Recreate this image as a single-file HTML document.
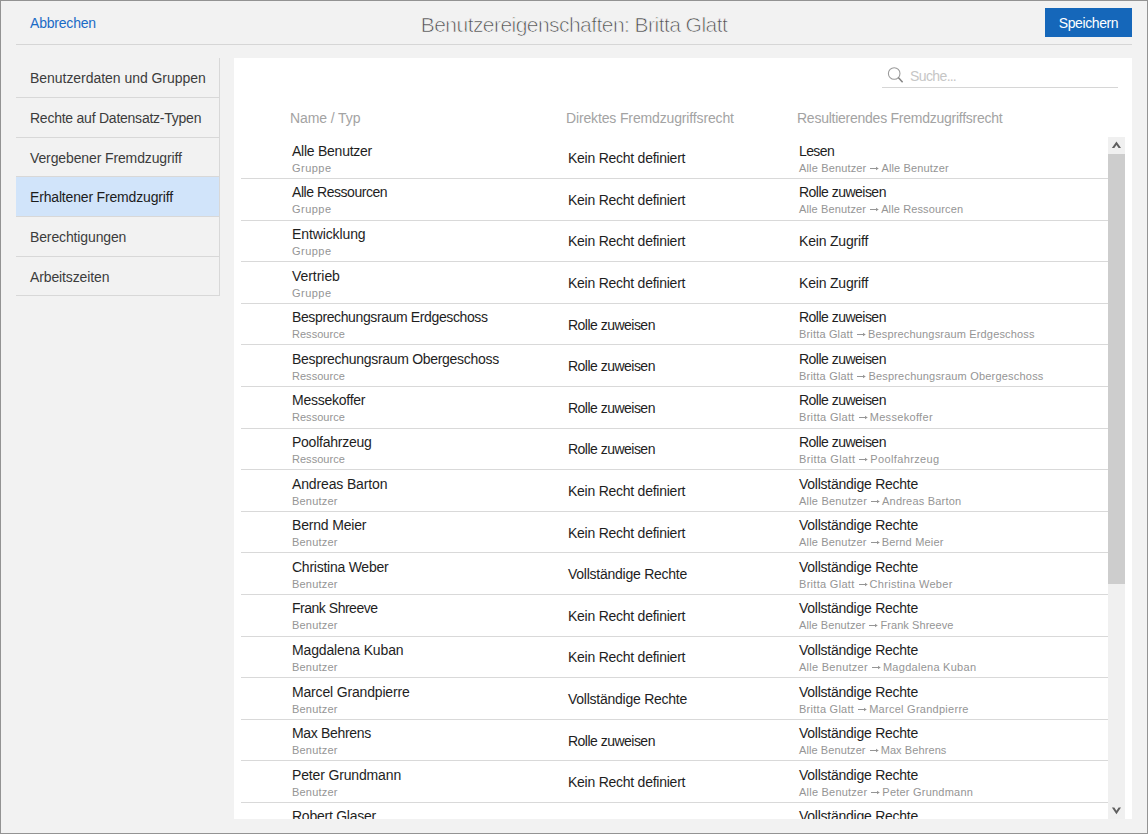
<!DOCTYPE html>
<html><head><meta charset="utf-8"><style>
*{margin:0;padding:0;box-sizing:border-box}
html,body{width:1148px;height:834px;overflow:hidden;background:#f2f2f2}
body{position:relative;font-family:"Liberation Sans",sans-serif;color:#1e1e1e}
.a{position:absolute;white-space:nowrap}
.frame{position:absolute;left:0;top:0;width:1148px;height:834px;border:1px solid #939393;pointer-events:none}
.hl{position:absolute;height:1px;background:#d6d6d6}
.t14{position:absolute;white-space:nowrap;font-size:14px;line-height:20px;height:20px;letter-spacing:-0.25px}
.s14{position:absolute;white-space:nowrap;font-size:14px;line-height:20px;height:20px}
.t11{position:absolute;white-space:nowrap;font-size:11px;line-height:20px;height:20px;color:#959595;letter-spacing:0.2px}
.hdr{color:#a3a3a3}
</style></head><body>

<div class="s14" style="left:30px;top:13px;color:#1a6bc6;letter-spacing:-0.2px">Abbrechen</div>
<div class="a" style="left:0;width:1148px;text-align:center;top:15px;font-size:21px;line-height:20px;letter-spacing:-0.55px;color:#4a4a4a;-webkit-text-stroke:0.7px #f2f2f2">Benutzereigenschaften: Britta Glatt</div>
<div class="a" style="left:1045px;top:8px;width:87px;height:29px;background:#1567ba"></div>
<div class="t14" style="left:1045px;width:87px;text-align:center;top:13px;color:#fff;letter-spacing:-0.4px">Speichern</div>
<div class="hl" style="left:16px;top:44px;width:1116px"></div>
<div class="a" style="left:219px;top:58px;width:1px;height:238px;background:#d8d8d8"></div>
<div class="hl" style="left:16px;top:97px;width:203px;background:#d8d8d8"></div>
<div class="s14" style="left:30px;top:68px;color:#3c3c3c;letter-spacing:-0.040px;">Benutzerdaten und Gruppen</div>
<div class="hl" style="left:16px;top:137px;width:203px;background:#d8d8d8"></div>
<div class="s14" style="left:30px;top:108px;color:#3c3c3c;letter-spacing:-0.240px;">Rechte auf Datensatz-Typen</div>
<div class="hl" style="left:16px;top:176px;width:203px;background:#d8d8d8"></div>
<div class="s14" style="left:30px;top:148px;color:#3c3c3c;letter-spacing:-0.120px;">Vergebener Fremdzugriff</div>
<div class="a" style="left:16px;top:177px;width:203px;height:39px;background:#d1e4fa"></div>
<div class="hl" style="left:16px;top:216px;width:203px;background:#d8d8d8"></div>
<div class="s14" style="left:30px;top:187px;color:#1c1c1c;letter-spacing:-0.170px;">Erhaltener Fremdzugriff</div>
<div class="hl" style="left:16px;top:256px;width:203px;background:#d8d8d8"></div>
<div class="s14" style="left:30px;top:227px;color:#3c3c3c;letter-spacing:-0.130px;">Berechtigungen</div>
<div class="hl" style="left:16px;top:295px;width:203px;background:#d8d8d8"></div>
<div class="s14" style="left:30px;top:267px;color:#3c3c3c;letter-spacing:-0.120px;">Arbeitszeiten</div>
<div class="a" style="left:234px;top:58px;width:898px;height:761px;background:#fff;overflow:hidden">
<svg class="a" style="left:652px;top:8px" width="20" height="20" viewBox="0 0 20 20"><circle cx="8.2" cy="7.5" r="5.8" fill="none" stroke="#9a9a9a" stroke-width="1.05"/><line x1="12.3" y1="11.6" x2="16.6" y2="16.3" stroke="#858585" stroke-width="1.5"/></svg>
<div class="t14" style="left:676px;top:8px;color:#c6c6c6;letter-spacing:-0.6px">Suche<span style="letter-spacing:-0.9px">...</span></div>
<div class="hl" style="left:648px;top:29px;width:236px;background:#d6d6d6"></div>
<div class="t14 hdr" style="left:56px;top:50px;letter-spacing:-0.094px;">Name / Typ</div>
<div class="t14 hdr" style="left:332px;top:50px;letter-spacing:-0.142px;">Direktes Fremdzugriffsrecht</div>
<div class="t14 hdr" style="left:563px;top:50px;letter-spacing:-0.250px;">Resultierendes Fremdzugriffsrecht</div>
<div class="hl" style="left:7px;top:120px;width:867px;background:#d9d9d9"></div>
<div class="t14" style="left:58px;top:83px;letter-spacing:-0.250px;">Alle Benutzer</div>
<div class="t11" style="left:58px;top:100px;letter-spacing:0.480px;">Gruppe</div>
<div class="t14" style="left:334px;top:90px;letter-spacing:-0.250px;">Kein Recht definiert</div>
<div class="t14" style="left:565px;top:83px;letter-spacing:-0.600px;">Lesen</div>
<div class="t11" style="left:565px;top:100px;letter-spacing:0.150px;">Alle Benutzer<svg width="15" height="7" viewBox="0 0 15 7" style="vertical-align:baseline"><rect x="4" y="3" width="8.2" height="1" fill="#959595"/><path d="M10 1.8 L12.5 3.5 L10 5.2 Z" fill="#959595"/></svg>Alle Benutzer</div>
<div class="hl" style="left:7px;top:162px;width:867px;background:#d9d9d9"></div>
<div class="t14" style="left:58px;top:124px;letter-spacing:-0.450px;">Alle Ressourcen</div>
<div class="t11" style="left:58px;top:141px;letter-spacing:0.480px;">Gruppe</div>
<div class="t14" style="left:334px;top:132px;letter-spacing:-0.250px;">Kein Recht definiert</div>
<div class="t14" style="left:565px;top:124px;letter-spacing:-0.519px;">Rolle zuweisen</div>
<div class="t11" style="left:565px;top:141px;letter-spacing:0.130px;">Alle Benutzer<svg width="15" height="7" viewBox="0 0 15 7" style="vertical-align:baseline"><rect x="4" y="3" width="8.2" height="1" fill="#959595"/><path d="M10 1.8 L12.5 3.5 L10 5.2 Z" fill="#959595"/></svg>Alle Ressourcen</div>
<div class="hl" style="left:7px;top:203px;width:867px;background:#d9d9d9"></div>
<div class="t14" style="left:58px;top:166px;letter-spacing:-0.110px;">Entwicklung</div>
<div class="t11" style="left:58px;top:183px;letter-spacing:0.480px;">Gruppe</div>
<div class="t14" style="left:334px;top:173px;letter-spacing:-0.250px;">Kein Recht definiert</div>
<div class="t14" style="left:565px;top:173px;letter-spacing:-0.186px;">Kein Zugriff</div>
<div class="hl" style="left:7px;top:245px;width:867px;background:#d9d9d9"></div>
<div class="t14" style="left:58px;top:208px;letter-spacing:-0.050px;">Vertrieb</div>
<div class="t11" style="left:58px;top:225px;letter-spacing:0.480px;">Gruppe</div>
<div class="t14" style="left:334px;top:215px;letter-spacing:-0.250px;">Kein Recht definiert</div>
<div class="t14" style="left:565px;top:215px;letter-spacing:-0.186px;">Kein Zugriff</div>
<div class="hl" style="left:7px;top:286px;width:867px;background:#d9d9d9"></div>
<div class="t14" style="left:58px;top:249px;letter-spacing:-0.380px;">Besprechungsraum Erdgeschoss</div>
<div class="t11" style="left:58px;top:266px;letter-spacing:0.025px;">Ressource</div>
<div class="t14" style="left:334px;top:257px;letter-spacing:-0.519px;">Rolle zuweisen</div>
<div class="t14" style="left:565px;top:249px;letter-spacing:-0.519px;">Rolle zuweisen</div>
<div class="t11" style="left:565px;top:266px;letter-spacing:0.167px;">Britta Glatt<svg width="15" height="7" viewBox="0 0 15 7" style="vertical-align:baseline"><rect x="4" y="3" width="8.2" height="1" fill="#959595"/><path d="M10 1.8 L12.5 3.5 L10 5.2 Z" fill="#959595"/></svg>Besprechungsraum Erdgeschoss</div>
<div class="hl" style="left:7px;top:328px;width:867px;background:#d9d9d9"></div>
<div class="t14" style="left:58px;top:291px;letter-spacing:-0.300px;">Besprechungsraum Obergeschoss</div>
<div class="t11" style="left:58px;top:308px;letter-spacing:0.025px;">Ressource</div>
<div class="t14" style="left:334px;top:298px;letter-spacing:-0.519px;">Rolle zuweisen</div>
<div class="t14" style="left:565px;top:291px;letter-spacing:-0.519px;">Rolle zuweisen</div>
<div class="t11" style="left:565px;top:308px;letter-spacing:0.200px;">Britta Glatt<svg width="15" height="7" viewBox="0 0 15 7" style="vertical-align:baseline"><rect x="4" y="3" width="8.2" height="1" fill="#959595"/><path d="M10 1.8 L12.5 3.5 L10 5.2 Z" fill="#959595"/></svg>Besprechungsraum Obergeschoss</div>
<div class="hl" style="left:7px;top:370px;width:867px;background:#d9d9d9"></div>
<div class="t14" style="left:58px;top:332px;letter-spacing:-0.250px;">Messekoffer</div>
<div class="t11" style="left:58px;top:349px;letter-spacing:0.025px;">Ressource</div>
<div class="t14" style="left:334px;top:340px;letter-spacing:-0.519px;">Rolle zuweisen</div>
<div class="t14" style="left:565px;top:332px;letter-spacing:-0.519px;">Rolle zuweisen</div>
<div class="t11" style="left:565px;top:349px;letter-spacing:0.312px;">Britta Glatt<svg width="15" height="7" viewBox="0 0 15 7" style="vertical-align:baseline"><rect x="4" y="3" width="8.2" height="1" fill="#959595"/><path d="M10 1.8 L12.5 3.5 L10 5.2 Z" fill="#959595"/></svg>Messekoffer</div>
<div class="hl" style="left:7px;top:411px;width:867px;background:#d9d9d9"></div>
<div class="t14" style="left:58px;top:374px;letter-spacing:-0.250px;">Poolfahrzeug</div>
<div class="t11" style="left:58px;top:391px;letter-spacing:0.025px;">Ressource</div>
<div class="t14" style="left:334px;top:381px;letter-spacing:-0.519px;">Rolle zuweisen</div>
<div class="t14" style="left:565px;top:374px;letter-spacing:-0.519px;">Rolle zuweisen</div>
<div class="t11" style="left:565px;top:391px;letter-spacing:0.362px;">Britta Glatt<svg width="15" height="7" viewBox="0 0 15 7" style="vertical-align:baseline"><rect x="4" y="3" width="8.2" height="1" fill="#959595"/><path d="M10 1.8 L12.5 3.5 L10 5.2 Z" fill="#959595"/></svg>Poolfahrzeug</div>
<div class="hl" style="left:7px;top:453px;width:867px;background:#d9d9d9"></div>
<div class="t14" style="left:58px;top:416px;letter-spacing:-0.142px;">Andreas Barton</div>
<div class="t11" style="left:58px;top:433px;letter-spacing:0.200px;">Benutzer</div>
<div class="t14" style="left:334px;top:423px;letter-spacing:-0.250px;">Kein Recht definiert</div>
<div class="t14" style="left:565px;top:416px;letter-spacing:-0.250px;">Vollständige Rechte</div>
<div class="t11" style="left:565px;top:433px;letter-spacing:0.200px;">Alle Benutzer<svg width="15" height="7" viewBox="0 0 15 7" style="vertical-align:baseline"><rect x="4" y="3" width="8.2" height="1" fill="#959595"/><path d="M10 1.8 L12.5 3.5 L10 5.2 Z" fill="#959595"/></svg>Andreas Barton</div>
<div class="hl" style="left:7px;top:494px;width:867px;background:#d9d9d9"></div>
<div class="t14" style="left:58px;top:457px;letter-spacing:-0.180px;">Bernd Meier</div>
<div class="t11" style="left:58px;top:474px;letter-spacing:0.200px;">Benutzer</div>
<div class="t14" style="left:334px;top:465px;letter-spacing:-0.250px;">Kein Recht definiert</div>
<div class="t14" style="left:565px;top:457px;letter-spacing:-0.250px;">Vollständige Rechte</div>
<div class="t11" style="left:565px;top:474px;letter-spacing:0.173px;">Alle Benutzer<svg width="15" height="7" viewBox="0 0 15 7" style="vertical-align:baseline"><rect x="4" y="3" width="8.2" height="1" fill="#959595"/><path d="M10 1.8 L12.5 3.5 L10 5.2 Z" fill="#959595"/></svg>Bernd Meier</div>
<div class="hl" style="left:7px;top:536px;width:867px;background:#d9d9d9"></div>
<div class="t14" style="left:58px;top:499px;letter-spacing:-0.250px;">Christina Weber</div>
<div class="t11" style="left:58px;top:516px;letter-spacing:0.200px;">Benutzer</div>
<div class="t14" style="left:334px;top:506px;letter-spacing:-0.250px;">Vollständige Rechte</div>
<div class="t14" style="left:565px;top:499px;letter-spacing:-0.250px;">Vollständige Rechte</div>
<div class="t11" style="left:565px;top:516px;letter-spacing:0.297px;">Britta Glatt<svg width="15" height="7" viewBox="0 0 15 7" style="vertical-align:baseline"><rect x="4" y="3" width="8.2" height="1" fill="#959595"/><path d="M10 1.8 L12.5 3.5 L10 5.2 Z" fill="#959595"/></svg>Christina Weber</div>
<div class="hl" style="left:7px;top:578px;width:867px;background:#d9d9d9"></div>
<div class="t14" style="left:58px;top:540px;letter-spacing:-0.483px;">Frank Shreeve</div>
<div class="t11" style="left:58px;top:557px;letter-spacing:0.200px;">Benutzer</div>
<div class="t14" style="left:334px;top:548px;letter-spacing:-0.250px;">Kein Recht definiert</div>
<div class="t14" style="left:565px;top:540px;letter-spacing:-0.250px;">Vollständige Rechte</div>
<div class="t11" style="left:565px;top:557px;letter-spacing:0.075px;">Alle Benutzer<svg width="15" height="7" viewBox="0 0 15 7" style="vertical-align:baseline"><rect x="4" y="3" width="8.2" height="1" fill="#959595"/><path d="M10 1.8 L12.5 3.5 L10 5.2 Z" fill="#959595"/></svg>Frank Shreeve</div>
<div class="hl" style="left:7px;top:619px;width:867px;background:#d9d9d9"></div>
<div class="t14" style="left:58px;top:582px;letter-spacing:-0.150px;">Magdalena Kuban</div>
<div class="t11" style="left:58px;top:599px;letter-spacing:0.200px;">Benutzer</div>
<div class="t14" style="left:334px;top:589px;letter-spacing:-0.250px;">Kein Recht definiert</div>
<div class="t14" style="left:565px;top:582px;letter-spacing:-0.250px;">Vollständige Rechte</div>
<div class="t11" style="left:565px;top:599px;letter-spacing:0.270px;">Alle Benutzer<svg width="15" height="7" viewBox="0 0 15 7" style="vertical-align:baseline"><rect x="4" y="3" width="8.2" height="1" fill="#959595"/><path d="M10 1.8 L12.5 3.5 L10 5.2 Z" fill="#959595"/></svg>Magdalena Kuban</div>
<div class="hl" style="left:7px;top:661px;width:867px;background:#d9d9d9"></div>
<div class="t14" style="left:58px;top:624px;letter-spacing:-0.168px;">Marcel Grandpierre</div>
<div class="t11" style="left:58px;top:641px;letter-spacing:0.200px;">Benutzer</div>
<div class="t14" style="left:334px;top:631px;letter-spacing:-0.250px;">Vollständige Rechte</div>
<div class="t14" style="left:565px;top:624px;letter-spacing:-0.250px;">Vollständige Rechte</div>
<div class="t11" style="left:565px;top:641px;letter-spacing:0.266px;">Britta Glatt<svg width="15" height="7" viewBox="0 0 15 7" style="vertical-align:baseline"><rect x="4" y="3" width="8.2" height="1" fill="#959595"/><path d="M10 1.8 L12.5 3.5 L10 5.2 Z" fill="#959595"/></svg>Marcel Grandpierre</div>
<div class="hl" style="left:7px;top:702px;width:867px;background:#d9d9d9"></div>
<div class="t14" style="left:58px;top:665px;letter-spacing:-0.320px;">Max Behrens</div>
<div class="t11" style="left:58px;top:682px;letter-spacing:0.200px;">Benutzer</div>
<div class="t14" style="left:334px;top:673px;letter-spacing:-0.519px;">Rolle zuweisen</div>
<div class="t14" style="left:565px;top:665px;letter-spacing:-0.250px;">Vollständige Rechte</div>
<div class="t11" style="left:565px;top:682px;letter-spacing:0.092px;">Alle Benutzer<svg width="15" height="7" viewBox="0 0 15 7" style="vertical-align:baseline"><rect x="4" y="3" width="8.2" height="1" fill="#959595"/><path d="M10 1.8 L12.5 3.5 L10 5.2 Z" fill="#959595"/></svg>Max Behrens</div>
<div class="hl" style="left:7px;top:744px;width:867px;background:#d9d9d9"></div>
<div class="t14" style="left:58px;top:707px;letter-spacing:-0.150px;">Peter Grundmann</div>
<div class="t11" style="left:58px;top:724px;letter-spacing:0.200px;">Benutzer</div>
<div class="t14" style="left:334px;top:714px;letter-spacing:-0.250px;">Kein Recht definiert</div>
<div class="t14" style="left:565px;top:707px;letter-spacing:-0.250px;">Vollständige Rechte</div>
<div class="t11" style="left:565px;top:724px;letter-spacing:0.223px;">Alle Benutzer<svg width="15" height="7" viewBox="0 0 15 7" style="vertical-align:baseline"><rect x="4" y="3" width="8.2" height="1" fill="#959595"/><path d="M10 1.8 L12.5 3.5 L10 5.2 Z" fill="#959595"/></svg>Peter Grundmann</div>
<div class="t14" style="left:58px;top:748px;letter-spacing:-0.250px;">Robert Glaser</div>
<div class="t11" style="left:58px;top:765px;letter-spacing:0.200px;">Benutzer</div>
<div class="t14" style="left:565px;top:748px;letter-spacing:-0.250px;">Vollständige Rechte</div>
<div class="t11" style="left:565px;top:765px;letter-spacing:0.200px;">Alle Benutzer<svg width="15" height="7" viewBox="0 0 15 7" style="vertical-align:baseline"><rect x="4" y="3" width="8.2" height="1" fill="#959595"/><path d="M10 1.8 L12.5 3.5 L10 5.2 Z" fill="#959595"/></svg>Robert Glaser</div>
<div class="a" style="left:874px;top:79px;width:17px;height:682px;background:#f0f0f0"></div>
<div class="a" style="left:874px;top:96px;width:17px;height:430px;background:#cdcdcd"></div>
<svg class="a" style="left:874px;top:79px" width="17" height="17" viewBox="0 0 17 17"><path d="M3.9 11.1 L8.45 4.4 L13 11.1 L10.6 11.1 L8.45 7.9 L6.3 11.1 Z" fill="#5f5f5f"/></svg>
<svg class="a" style="left:874px;top:744px" width="17" height="17" viewBox="0 0 17 17"><path d="M3.9 5.6 L6.3 5.6 L8.45 8.8 L10.6 5.6 L13 5.6 L8.45 12.3 Z" fill="#5f5f5f"/></svg>
</div>
<div class="frame"></div>
</body></html>
